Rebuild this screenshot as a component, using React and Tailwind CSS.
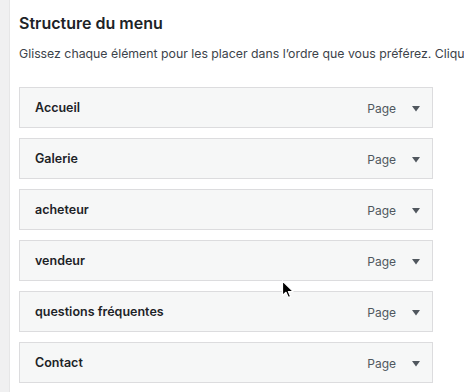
export default function App() {
  const items = ["Accueil", "Galerie", "acheteur", "vendeur", "questions fréquentes", "Contact"];
  return (
    <div className="relative flex w-[464px] h-[392px] overflow-hidden bg-white" style={{ fontFamily: "Inter, 'Liberation Sans', sans-serif" }}>
      <div className="w-[10px] shrink-0 bg-[#f0f0f1] border-r border-[#e6e6e7]" />
      <div className="flex-1 min-w-0 pl-[9px] pt-[12px]">
        <h3 className="text-[16px] leading-[22px] font-semibold text-[#1d2327] m-0">Structure du menu</h3>
        <p className="mt-[10px] text-[12.3px] leading-[20px] text-[#3c434a] whitespace-nowrap overflow-hidden">
          Glissez chaque élément pour les placer dans l’ordre que vous préférez. Cliquez sur la flèche
        </p>
        <ul className="mt-[23px] flex flex-col gap-[10px] w-[414px]">
          {items.map((t) => (
            <li key={t} className="h-[41px] flex items-center border border-[#dcdcde] bg-[#f6f7f7] pl-[15px] pr-[12px] pt-[2px]">
              <span className="text-[12.5px] font-semibold text-[#1d2327] flex-1">{t}</span>
              <span className="text-[12px] text-[#50575e] mr-[16px]">Page</span>
              <svg width="8" height="6" viewBox="0 0 8 6" className="block">
                <path d="M0 0 H8 L4 5.5 Z" fill="#50575e" />
              </svg>
            </li>
          ))}
        </ul>
      </div>
      <svg className="absolute left-[281px] top-[280px]" width="14" height="20" viewBox="0 0 14 20">
        <path d="M1.5 1 L1.5 15.5 L5 12.3 L7.3 17.6 L9.6 16.6 L7.4 11.5 L12 11.3 Z" fill="#000" stroke="#fff" strokeWidth="1.2" strokeLinejoin="round" />
      </svg>
    </div>
  );
}
